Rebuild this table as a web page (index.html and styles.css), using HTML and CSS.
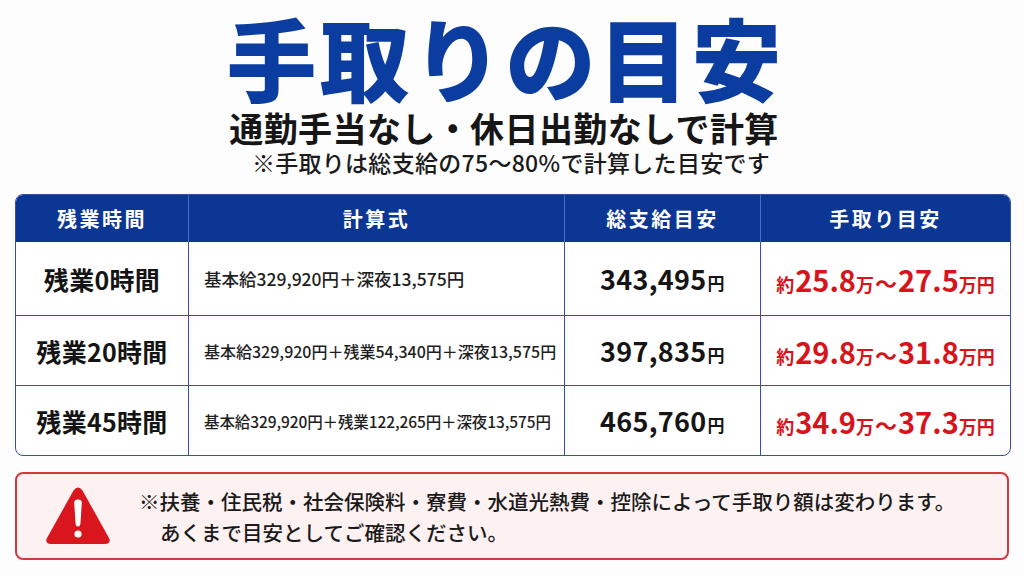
FILE: index.html
```html
<!DOCTYPE html>
<html lang="ja">
<head>
<meta charset="utf-8">
<link rel="stylesheet" href="styles.css">
</head>
<body>
<div class="page">
  <header class="head">
    <h1 class="title">手取りの目安</h1>
    <p class="sub">通勤手当なし・休日出勤なしで計算</p>
    <p class="note">※手取りは総支給の75〜80%で計算した目安です</p>
  </header>

  <table class="tbl">
    <colgroup>
      <col class="c1"><col class="c2"><col class="c3"><col class="c4">
    </colgroup>
    <thead>
      <tr><th>残業時間</th><th>計算式</th><th>総支給目安</th><th>手取り目安</th></tr>
    </thead>
    <tbody>
      <tr class="r1">
        <td class="lbl">残業0時間</td>
        <td class="fx fx1">基本給329,920円＋深夜13,575円</td>
        <td class="tot">343,495<span class="yen">円</span></td>
        <td class="net"><span class="pre">約</span>25.8<span class="man">万</span><span class="tl">〜</span>27.5<span class="man">万円</span></td>
      </tr>
      <tr>
        <td class="lbl">残業20時間</td>
        <td class="fx fx2">基本給329,920円＋残業54,340円＋深夜13,575円</td>
        <td class="tot">397,835<span class="yen">円</span></td>
        <td class="net"><span class="pre">約</span>29.8<span class="man">万</span><span class="tl">〜</span>31.8<span class="man">万円</span></td>
      </tr>
      <tr>
        <td class="lbl">残業45時間</td>
        <td class="fx fx3">基本給329,920円＋残業122,265円＋深夜13,575円</td>
        <td class="tot">465,760<span class="yen">円</span></td>
        <td class="net"><span class="pre">約</span>34.9<span class="man">万</span><span class="tl">〜</span>37.3<span class="man">万円</span></td>
      </tr>
    </tbody>
  </table>

  <div class="warn">
    <svg class="warn-icon" viewBox="0 0 66 60" width="66" height="60">
      <path d="M28.5 4.5 Q33 -1.5 37.5 4.5 L64 52 Q66.5 58 60 58 L6 58 Q-0.5 58 2 52 Z" fill="#d9151d"/>
      <path d="M29.2 17 Q29 13.5 33 13.5 Q37 13.5 36.8 17 L35.4 38 Q35.2 40.5 33 40.5 Q30.8 40.5 30.6 38 Z" fill="#fff"/>
      <circle cx="33" cy="48" r="3.6" fill="#fff"/>
    </svg>
    <div class="warn-text">
      <p class="w1">※扶養・住民税・社会保険料・寮費・水道光熱費・控除によって手取り額は変わります。</p>
      <p class="w2">あくまで目安としてご確認ください。</p>
    </div>
  </div>
</div>
</body>
</html>
```

FILE: styles.css
```css
* { box-sizing: border-box; }
html, body { margin: 0; padding: 0; background: #fdfdfd; }
body {
  font-family: "Noto Sans CJK JP", "Noto Sans", sans-serif;
  color: #151515;
  width: 1024px;
  height: 576px;
  overflow: hidden;
}
.page {
  padding: 0 15px;
  display: flex;
  flex-direction: column;
}
.head {
  display: flex;
  flex-direction: column;
  align-items: center;
  padding-top: 8px;
  padding-right: 16px;
}
.title {
  margin: 0;
  font-size: 90px;
  line-height: 96px;
  font-weight: 900;
  color: #0b3da0;
  letter-spacing: 3px;
  padding-left: 3px;
}
.sub {
  margin: 5px 0 0 0;
  font-size: 34px;
  line-height: 38px;
  font-weight: 700;
  color: #161616;
  letter-spacing: 0.4px;
}
.note {
  margin: 0;
  font-size: 23px;
  line-height: 30px;
  font-weight: 500;
  color: #1a1a1a;
  padding-left: 14px;
  letter-spacing: 0.3px;
}
.tbl {
  margin-top: 17px;
  width: 994px;
  border-collapse: separate;
  border-spacing: 0;
  table-layout: fixed;
  border: 1.5px solid #3550ac;
  border-radius: 8px;
  overflow: hidden;
  background: #fff;
}
.c1 { width: 172px; }
.c2 { width: 376px; }
.c3 { width: 196px; }
.c4 { width: 250px; }
.tbl th {
  background: #0b3694;
  color: #fff;
  height: 47px;
  font-size: 20px;
  font-weight: 700;
  letter-spacing: 2.5px;
  border-left: 1.5px solid #4c6cc4;
  padding: 0;
}
.tbl th:first-child, .tbl td:first-child { border-left: none; }
.tbl td {
  border-left: 1.5px solid #3550ac;
  border-top: 1.5px solid #3550ac;
  height: 70px;
  padding: 0;
  vertical-align: middle;
}
.tbl tbody tr:first-child td { border-top: none; height: 73px; }
.lbl {
  text-align: center;
  font-size: 25px;
  font-weight: 700;
  color: #141414;
  letter-spacing: 0.3px;
}
.fx {
  padding-left: 15px !important;
  font-weight: 500;
  color: #1e1e1e;
  white-space: nowrap;
}
.fx1 { font-size: 17.5px; }
.fx2 { font-size: 16px; }
.fx3 { font-size: 15.5px; letter-spacing: -0.1px; }
.tot {
  text-align: center;
  font-size: 27px;
  font-weight: 700;
  color: #151515;
  letter-spacing: 0.3px;
}
.yen { font-size: 17px; margin-left: 1px; }
.net {
  text-align: center;
  font-size: 29px;
  font-weight: 700;
  color: #d7141c;
  white-space: nowrap;
}
.pre { font-size: 18px; margin-right: 1px; }
.man { font-size: 18px; }
.tl { font-size: 22px; margin: 0 1px; }
.warn {
  margin-top: 16px;
  height: 88px;
  width: 994px;
  border: 2px solid #d3383d;
  border-radius: 8px;
  background: #fdf1f1;
  display: flex;
  align-items: center;
  padding-left: 28px;
}
.warn-icon { flex: none; }
.warn-text {
  margin-left: 28px;
  display: flex;
  flex-direction: column;
  gap: 3px;
}
.warn-text p {
  margin: 0;
  font-size: 20.5px;
  line-height: 28px;
  font-weight: 500;
  color: #1a1a1a;
  white-space: nowrap;
}
.w2 { padding-left: 21px; }
```
